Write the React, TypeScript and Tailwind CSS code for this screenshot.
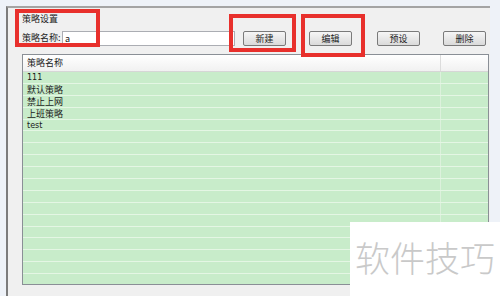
import React from "react";

const rows = ["111", "默认策略", "禁止上网", "上班策略", "test"];
const font = { fontFamily: '"Noto Sans CJK SC", "Liberation Sans", sans-serif' };

function Btn({ label, className = "" }: { label: string; className?: string }) {
  return (
    <button
      className={`h-[15px] w-[43px] rounded-[2px] border border-[#7a7a7a] bg-gradient-to-b from-[#f6f6f6] to-[#dadada] text-[9px] leading-[13px] text-[#222] ${className}`}
    >
      {label}
    </button>
  );
}

export default function App() {
  const filled = [...rows, ...Array(14).fill("")];
  return (
    <div
      className="relative h-[296px] w-[500px] overflow-hidden bg-[#eef2f8] pl-[6px] pt-[6px] text-[#1a1a1a]"
      style={font}
    >
      {/* window panel */}
      <div className="h-[290px] w-[484px] border-l-2 border-t-2 border-l-[#7c7c7c] border-t-[#a4a4a4] bg-[#f0f0f0] pl-[14px]">
        <div className="mt-[4px] h-[14px] text-[9px] leading-[14px]">策略设置</div>

        <div className="mt-[4px] flex h-[16px] items-center">
          <span className="w-[40px] text-[9px] leading-[14px]">策略名称:</span>
          <div className="h-[15px] w-[173px] border border-[#abadb3] bg-white pl-[2px] text-[9px] leading-[13px]">
            a
          </div>
          <Btn label="新建" className="ml-[8px]" />
          <Btn label="编辑" className="ml-[23px]" />
          <Btn label="预设" className="ml-[25px]" />
          <Btn label="删除" className="ml-[23px]" />
        </div>

        {/* list */}
        <div className="mt-[8px] h-[231px] w-[467px] overflow-hidden border border-[#8a8f96] bg-[#c8ecca]">
          <div className="flex h-[17px] border-b border-[#d6d6d6] bg-gradient-to-b from-white to-[#f1f1f1] text-[9px] leading-[16px]">
            <div className="w-[418px] border-r border-[#dcdcdc] pl-[4px]">策略名称</div>
            <div className="flex-1" />
          </div>
          {filled.map((r, i) => (
            <div key={i} className="flex h-[11.9px] border-b border-[#e4f6e4] text-[9px] leading-[12px]">
              <div
                className={`w-[418px] border-r border-[#dcf1dc] pl-[4px] ${/^[a-z0-9]+$/.test(r) ? "text-[8px]" : ""}`}
                style={/^[a-z0-9]+$/.test(r) ? { fontFamily: '"DejaVu Sans", sans-serif' } : undefined}
              >
                {r}
              </div>
              <div className="flex-1" />
            </div>
          ))}
        </div>
      </div>

      {/* red annotation boxes */}
      <div className="absolute left-[15px] top-[9px] h-[38px] w-[85px] border-4 border-[#e8302c]" />
      <div className="absolute left-[229px] top-[14px] h-[38px] w-[67px] border-4 border-[#e8302c]" />
      <div className="absolute left-[301px] top-[14px] h-[43px] w-[64px] border-4 border-[#e8302c]" />

      {/* watermark */}
      <div className="absolute left-[350px] top-[222px] flex h-[74px] w-[150px] items-center justify-center bg-white pb-[6px]">
        <span className="text-[35px] font-light leading-none text-[#c9c9c9]">软件技巧</span>
      </div>
    </div>
  );
}
